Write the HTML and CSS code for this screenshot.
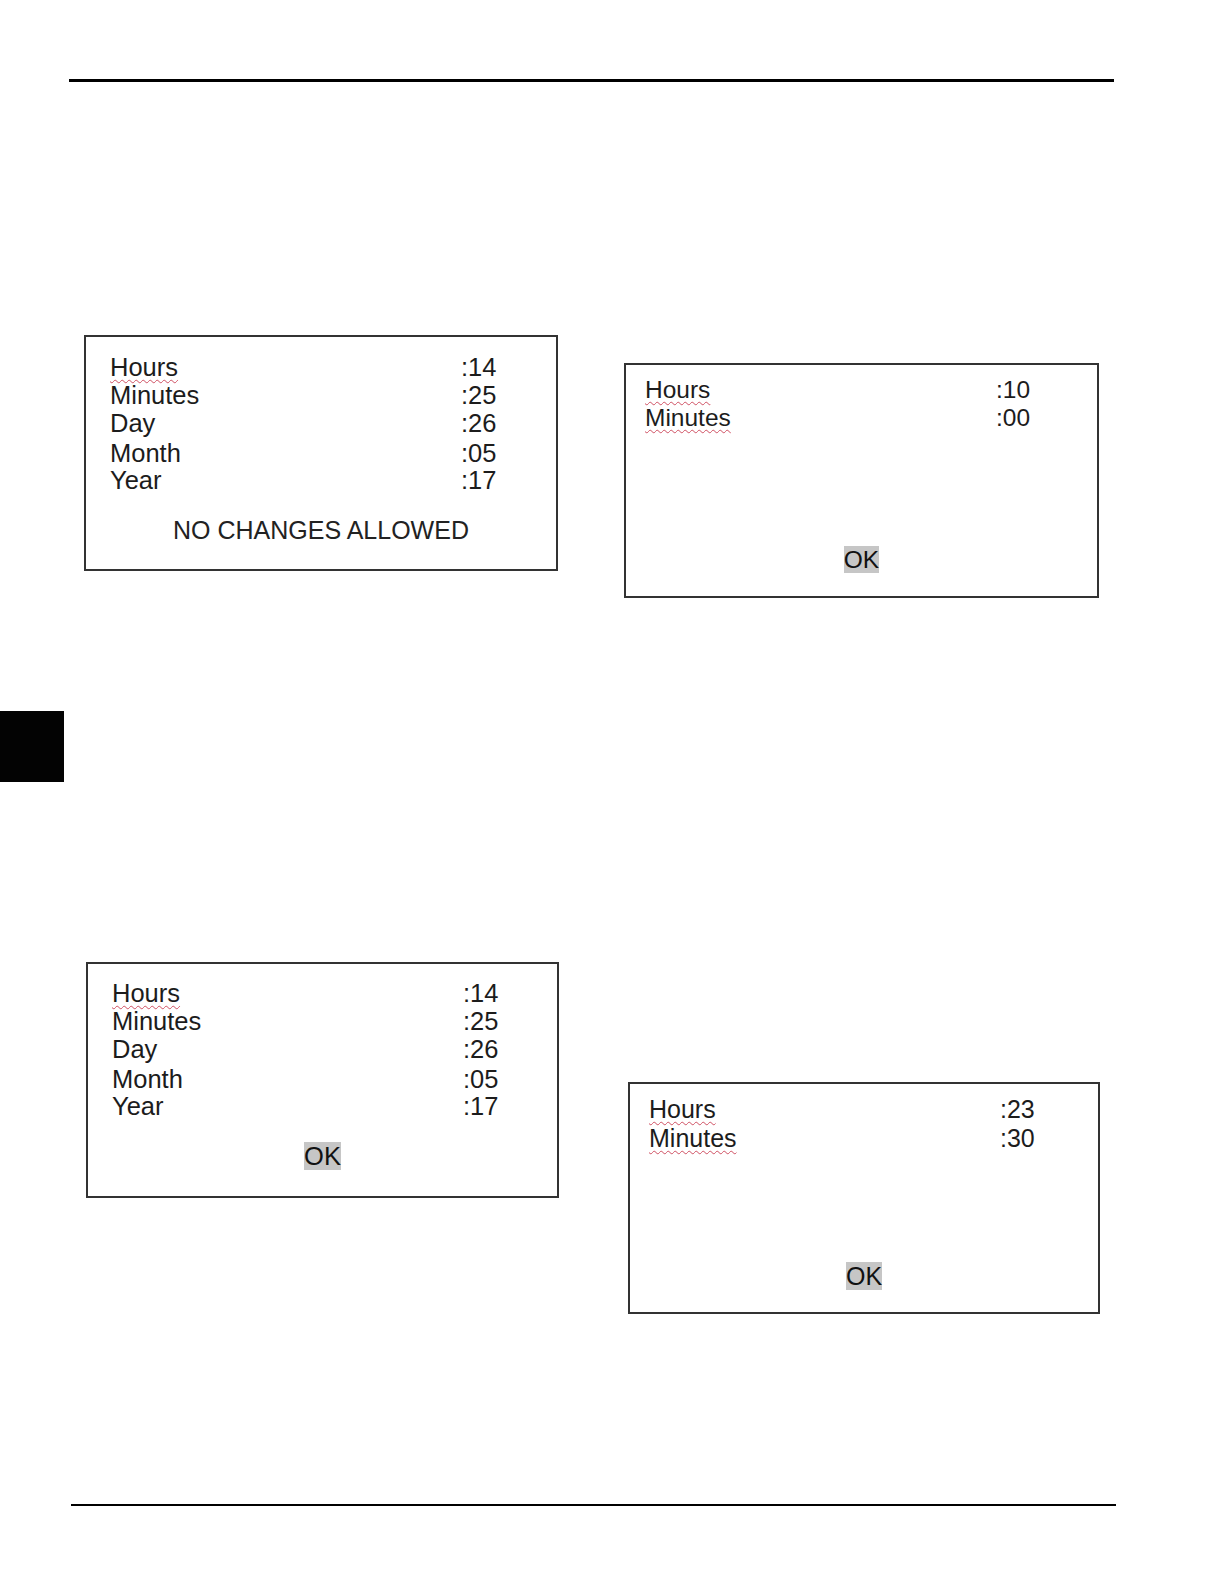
FILE: index.html
```html
<!DOCTYPE html>
<html lang="en">
<head>
<meta charset="utf-8">
<title>Clock settings</title>
<link rel="stylesheet" href="styles.css">
</head>
<body>
<div class="page">
  <div class="rule rule-top"></div>

  <div class="panel-row row-one">
    <div class="panel panel-a">
      <div class="fields">
        <div class="field"><span class="label spell">Hours</span><span class="value">:14</span></div>
        <div class="field"><span class="label">Minutes</span><span class="value">:25</span></div>
        <div class="field"><span class="label">Day</span><span class="value">:26</span></div>
        <div class="field field-month"><span class="label">Month</span><span class="value">:05</span></div>
        <div class="field field-year"><span class="label">Year</span><span class="value">:17</span></div>
      </div>
      <div class="note">NO CHANGES ALLOWED</div>
    </div>

    <div class="panel panel-b">
      <div class="fields">
        <div class="field"><span class="label spell">Hours</span><span class="value">:10</span></div>
        <div class="field"><span class="label spell">Minutes</span><span class="value">:00</span></div>
      </div>
      <div class="ok-line"><span class="ok">OK</span></div>
    </div>
  </div>

  <div class="tab"></div>

  <div class="panel-row row-two">
    <div class="panel panel-c">
      <div class="fields">
        <div class="field"><span class="label spell">Hours</span><span class="value">:14</span></div>
        <div class="field"><span class="label">Minutes</span><span class="value">:25</span></div>
        <div class="field"><span class="label">Day</span><span class="value">:26</span></div>
        <div class="field field-month"><span class="label">Month</span><span class="value">:05</span></div>
        <div class="field field-year"><span class="label">Year</span><span class="value">:17</span></div>
      </div>
      <div class="ok-line"><span class="ok">OK</span></div>
    </div>

    <div class="panel panel-d">
      <div class="fields">
        <div class="field"><span class="label spell">Hours</span><span class="value">:23</span></div>
        <div class="field"><span class="label spell">Minutes</span><span class="value">:30</span></div>
      </div>
      <div class="ok-line"><span class="ok">OK</span></div>
    </div>
  </div>

  <div class="rule rule-bottom"></div>
</div>
</body>
</html>
```

FILE: styles.css
```css
html, body {
  margin: 0;
  padding: 0;
  background: #ffffff;
}

body {
  font-family: "Liberation Sans", Arial, sans-serif;
  color: #1c1c1c;
}

.page {
  width: 1224px;
  min-height: 1584px;
  overflow: hidden;
}

.rule {
  background: #000000;
}

.rule-top {
  margin: 79px 0 0 69px;
  width: 1045px;
  height: 3px;
}

.rule-bottom {
  margin: 190px 0 0 71px;
  width: 1045px;
  height: 2px;
}

.panel-row {
  display: flex;
  align-items: flex-start;
}

.row-one {
  margin-top: 253px;
  padding-left: 84px;
  gap: 66px;
}

.row-two {
  margin-top: 180px;
  padding-left: 86px;
  gap: 69px;
}

.tab {
  margin-top: 113px;
  width: 64px;
  height: 71px;
  background: #030303;
}

.panel {
  box-sizing: border-box;
  border: 2px solid #333333;
  background: #ffffff;
}

.panel-a {
  width: 474px;
  height: 236px;
  padding-top: 16px;
  font-size: 25.5px;
}

.panel-b {
  width: 475px;
  height: 235px;
  margin-top: 28px;
  padding-top: 11px;
  font-size: 24.5px;
}

.panel-c {
  width: 473px;
  height: 236px;
  padding-top: 15px;
  font-size: 25.5px;
}

.panel-d {
  width: 472px;
  height: 232px;
  margin-top: 120px;
  padding-top: 11px;
  font-size: 25px;
}

.fields {
  display: flex;
  flex-direction: column;
}

.panel-a .fields { padding-left: 24px; }
.panel-b .fields { padding-left: 19px; }
.panel-c .fields { padding-left: 24px; }
.panel-d .fields { padding-left: 19px; }

.field {
  display: grid;
  grid-template-columns: 351px auto;
  line-height: 28px;
  white-space: nowrap;
}

.panel-d .field {
  line-height: 29px;
}

.field-month {
  margin-top: 2px;
}

.field-year {
  margin-top: -1px;
}

.spell {
  justify-self: start;
  text-decoration-line: underline;
  text-decoration-style: wavy;
  text-decoration-color: #cf5062;
  text-decoration-thickness: 1px;
  text-underline-offset: 3px;
}

.note {
  margin-top: 22px;
  text-align: center;
  line-height: 28px;
  font-size: 25px;
  color: #222222;
}

.ok-line {
  text-align: center;
  line-height: 28px;
}

.ok {
  background: #c6c6c6;
  color: #111111;
}

.panel-b .ok-line { margin-top: 114px; }
.panel-c .ok-line { margin-top: 22px; }
.panel-d .ok-line { margin-top: 109px; }
```
